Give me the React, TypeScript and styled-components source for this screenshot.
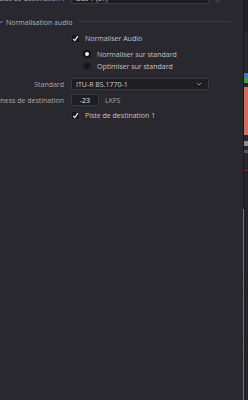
import React from "react";
import styled, { createGlobalStyle } from "styled-components";

const Global = createGlobalStyle`
  html, body { margin: 0; padding: 0; background: #28282e; }
  body { width: 248px; height: 400px; overflow: hidden; }
`;

const Page = styled.div`
  display: flex;
  width: 248px;
  height: 400px;
  background: #28282e;
  font-family: "Open Sans", "Noto Sans", sans-serif;
  font-size: 7px;
  color: #c4c4c8;
  overflow: hidden;
`;

const Main = styled.div`
  flex: 1;
  min-width: 0;
  display: flex;
  flex-direction: column;
  margin-top: -8px;
`;

const Row = styled.div<{ $mt: number; $h: number }>`
  display: flex;
  align-items: center;
  gap: 7px;
  margin-top: ${(p) => p.$mt}px;
  height: ${(p) => p.$h}px;
`;

const Label = styled.div`
  width: 64px;
  flex: none;
  display: flex;
  justify-content: flex-end;
  white-space: nowrap;
  color: #a9a9ae;
`;

const Control = styled.div<{ $indent?: number }>`
  display: flex;
  align-items: center;
  gap: 5px;
  padding-left: ${(p) => p.$indent ?? 0}px;
  white-space: nowrap;
`;

const Select = styled.div<{ $w: number; $h: number }>`
  box-sizing: border-box;
  width: ${(p) => p.$w}px;
  height: ${(p) => p.$h}px;
  background: #1e1e22;
  border: 1px solid #3a3a40;
  border-radius: 1px;
  display: flex;
  align-items: center;
  justify-content: space-between;
  padding: 0 6px 0 4px;
  color: #cfcfd3;
`;

const NumberBox = styled.div`
  box-sizing: border-box;
  width: 28px;
  height: 12px;
  background: #1e1e22;
  border: 1px solid #3a3a40;
  border-radius: 1px;
  display: flex;
  align-items: center;
  justify-content: center;
  color: #e6e6ea;
`;

const Unit = styled.span`
  margin-left: 1px;
  color: #a9a9ae;
`;

const CircleIcon = styled.div`
  width: 6px;
  height: 6px;
  border-radius: 50%;
  background: #36363c;
  margin-left: 1px;
  margin-top: 3px;
`;

const Section = styled.div`
  display: flex;
  align-items: center;
  margin-top: 13px;
  height: 10px;
  margin-left: -2px;
  margin-right: 12px;
  color: #b4b4b8;
  white-space: nowrap;
`;

const SectionLine = styled.div`
  flex: 1;
  height: 1px;
  background: #3a3a40;
  margin-left: 6px;
  margin-top: -2px;
`;

const Box = styled.div`
  width: 9px;
  height: 9px;
  box-sizing: border-box;
  background: #18181c;
  border: 1px solid #2c2c30;
  border-radius: 1px;
  display: flex;
  align-items: center;
  justify-content: center;
  flex: none;
`;

const Radio = styled.div<{ $on?: boolean }>`
  width: 8px;
  height: 8px;
  box-sizing: border-box;
  border-radius: 50%;
  background: ${(p) => (p.$on ? "#f2f2f4" : "#18181c")};
  border: ${(p) => (p.$on ? "2px solid #111114" : "1px solid #202024")};
  flex: none;
  margin-right: 1px;
`;

const Side = styled.div`
  width: 5px;
  flex: none;
  display: flex;
`;

const Divider = styled.div`
  width: 1px;
  display: flex;
  flex-direction: column;
`;

const DivSeg = styled.div<{ $h?: number; $c: string }>`
  ${(p) => (p.$h ? `height: ${p.$h}px;` : "flex: 1;")}
  background: ${(p) => p.$c};
`;

const Strip = styled.div`
  flex: 1;
  display: flex;
  flex-direction: column;
  background: #252529;
`;

const Seg = styled.div<{ $h: number; $c: string }>`
  height: ${(p) => p.$h}px;
  background: ${(p) => p.$c};
  flex: none;
`;

const Check = () => (
  <svg width="7" height="7" viewBox="0 0 7 7">
    <path d="M1.3 3.9 L2.8 5.6 L5.8 1.2" fill="none" stroke="#f4f4f6" strokeWidth="1.2" />
  </svg>
);

const Chevron = () => (
  <svg width="6" height="4" viewBox="0 0 6 4">
    <path d="M0.8 0.8 L3 3 L5.2 0.8" fill="none" stroke="#9a9aa0" strokeWidth="0.9" />
  </svg>
);

const SectionChevron = () => (
  <svg width="5" height="4" viewBox="0 0 5 4" style={{ marginRight: 3 }}>
    <path d="M0.5 0.8 L2.5 3 L4.5 0.8" fill="none" stroke="#9a9aa0" strokeWidth="0.9" />
  </svg>
);

export default function App() {
  return (
    <Page>
      <Global />
      <Main>
        <Row $mt={0} $h={12}>
          <Label>Bus de destination :</Label>
          <Control>
            <Select $w={138} $h={12}>
              <span>Bus 1 (ST)</span>
              <Chevron />
            </Select>
            <CircleIcon />
          </Control>
        </Row>
        <Section>
          <SectionChevron />
          <span>Normalisation audio</span>
          <SectionLine />
        </Section>
        <Row $mt={6} $h={10}>
          <Label />
          <Control>
            <Box>
              <Check />
            </Box>
            <span>Normaliser Audio</span>
          </Control>
        </Row>
        <Row $mt={6} $h={10}>
          <Label />
          <Control $indent={12}>
            <Radio $on />
            <span>Normaliser sur standard</span>
          </Control>
        </Row>
        <Row $mt={2} $h={10}>
          <Label />
          <Control $indent={12}>
            <Radio />
            <span>Optimiser sur standard</span>
          </Control>
        </Row>
        <Row $mt={7} $h={12}>
          <Label>Standard</Label>
          <Control>
            <Select $w={138} $h={12}>
              <span>ITU-R BS.1770-1</span>
              <Chevron />
            </Select>
          </Control>
        </Row>
        <Row $mt={4} $h={12}>
          <Label>Loudness de destination</Label>
          <Control>
            <NumberBox>-23</NumberBox>
            <Unit>LKFS</Unit>
          </Control>
        </Row>
        <Row $mt={4} $h={10}>
          <Label />
          <Control>
            <Box>
              <Check />
            </Box>
            <span>Piste de destination 1</span>
          </Control>
        </Row>
      </Main>
      <Side>
        <Divider>
          <DivSeg $h={209} $c="#19191c" />
          <DivSeg $c="#3f7bb4" />
        </Divider>
        <Strip>
          <Seg $h={32} $c="#1e1e22" />
          <Seg $h={41} $c="#26262b" />
          <Seg $h={5} $c="#3a78c0" />
          <Seg $h={5} $c="#3f9a4c" />
          <Seg $h={4} $c="#26262b" />
          <Seg $h={48} $c="#d56a5c" />
          <Seg $h={6} $c="#26262b" />
          <Seg $h={5} $c="#8c8c92" />
          <Seg $h={4} $c="#26262b" />
          <Seg $h={3} $c="#55555b" />
          <Seg $h={17} $c="#26262b" />
          <Seg $h={1} $c="#6a3036" />
          <Seg $h={103} $c="#232327" />
          <Seg $h={1} $c="#18181b" />
          <Seg $h={16} $c="#232327" />
          <Seg $h={1} $c="#18181b" />
          <Seg $h={48} $c="#232327" />
          <Seg $h={1} $c="#18181b" />
          <Seg $h={16} $c="#232327" />
          <Seg $h={1} $c="#18181b" />
          <Seg $h={43} $c="#232327" />
        </Strip>
      </Side>
    </Page>
  );
}
